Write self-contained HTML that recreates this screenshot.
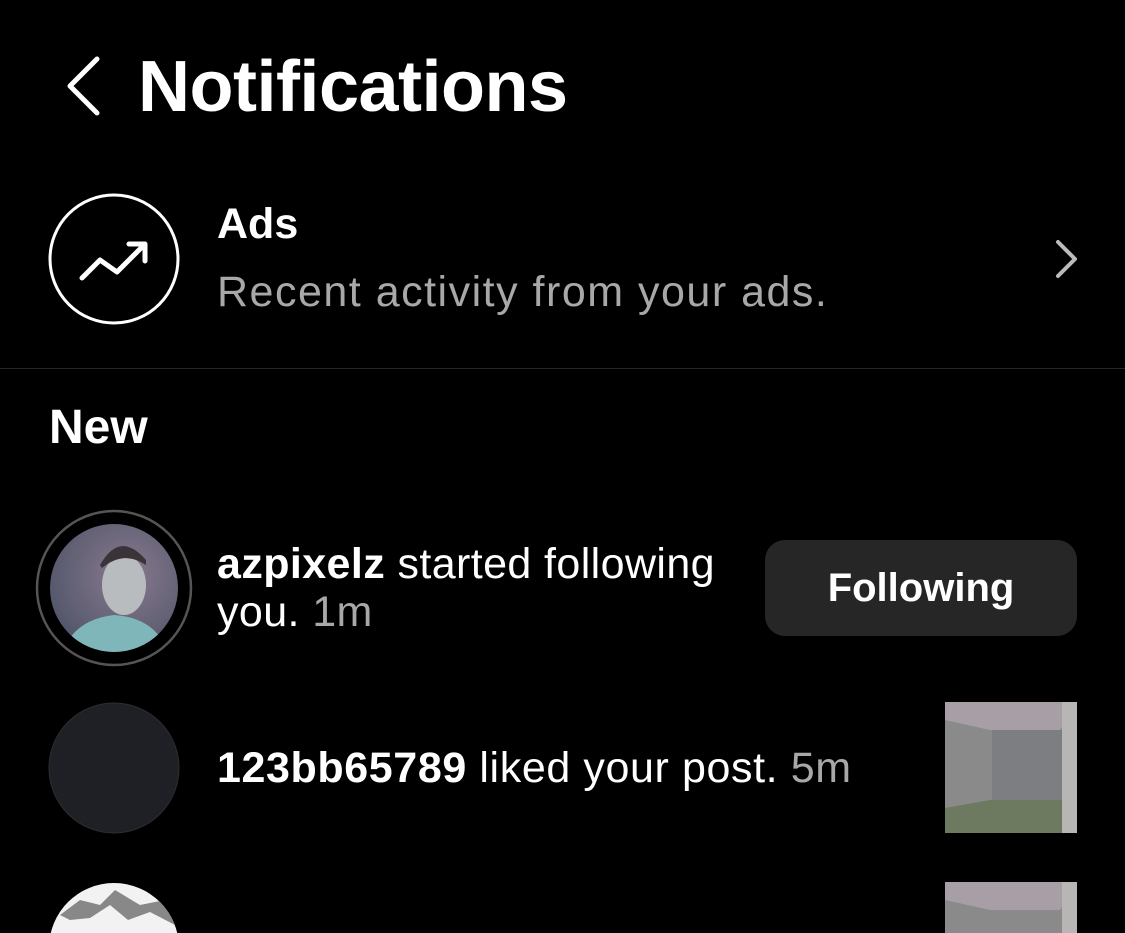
<!DOCTYPE html>
<html><head><style>
html,body{margin:0;padding:0;background:#000;width:1125px;height:933px;overflow:hidden;font-family:"Liberation Sans",Arial,sans-serif;color:#fff}
.a{position:absolute;white-space:nowrap}
</style></head><body>
<svg class="a" style="left:0;top:0" width="1125" height="933">
<path d="M97 59 L70 86 L97 113" fill="none" stroke="#fff" stroke-width="5" stroke-linecap="round" stroke-linejoin="round"/>
<circle cx="114" cy="259" r="64" fill="none" stroke="#fff" stroke-width="3"/>
<path d="M82 278 L100 260 L117 272 L145 244 M129 244 L145 244 L145 261" fill="none" stroke="#fff" stroke-width="5" stroke-linecap="round" stroke-linejoin="round"/>
<path d="M1058 242 L1075 259 L1058 276" fill="none" stroke="#bbb" stroke-width="4" stroke-linecap="round" stroke-linejoin="round"/>
<rect x="0" y="368" width="1125" height="1" fill="#262626"/>
<defs>
<radialGradient id="g1" cx="0.6" cy="0.4" r="0.7"><stop offset="0" stop-color="#8a7a8e"/><stop offset="1" stop-color="#4e5468"/></radialGradient>
<clipPath id="c1"><circle cx="114" cy="588" r="64"/></clipPath>
<clipPath id="c3"><circle cx="114" cy="948" r="65"/></clipPath>
</defs>
<circle cx="114" cy="588" r="77" fill="none" stroke="#555" stroke-width="2.5"/>
<circle cx="114" cy="588" r="64" fill="url(#g1)"/>
<g clip-path="url(#c1)">
<ellipse cx="124" cy="585" rx="22" ry="30" fill="#b9bcbf"/>
<path d="M100 565 Q120 530 146 560 L146 565 Q124 550 102 568Z" fill="#3a3438"/>
<path d="M60 660 Q70 620 114 615 Q160 618 170 660Z" fill="#7fb6b9"/>
</g>
<circle cx="114" cy="768" r="65" fill="#1e2026" stroke="#2e2e2e" stroke-width="1"/>
<g clip-path="url(#c3)">
<rect x="40" y="880" width="150" height="60" fill="#f2f2f2"/>
<path d="M60 915 L80 900 L100 905 L115 890 L140 905 L165 900 L175 925 L150 912 L128 920 L110 905 L90 918 L70 920Z" fill="#888"/>
</g>
<g>
<rect x="945" y="702" width="132" height="131" fill="#8a8a8a"/>
<polygon points="945,702 1077,702 1060,730 990,730 945,720" fill="#a89ea6"/>
<rect x="992" y="730" width="70" height="70" fill="#7d7e82"/>
<polygon points="945,808 990,800 1062,800 1077,833 945,833" fill="#6d7a5f"/>
<rect x="1062" y="702" width="15" height="131" fill="#b8b6b4"/>
<rect x="945" y="882" width="132" height="51" fill="#8a8a8a"/>
<polygon points="945,882 1077,882 1060,910 990,910 945,900" fill="#a89ea6"/>
<rect x="1062" y="882" width="15" height="51" fill="#b8b6b4"/>
</g>
</svg>
<div class="a" style="left:138px;top:46px;font-size:72px;font-weight:bold;letter-spacing:-0.5px">Notifications</div>
<div class="a" style="left:217px;top:200px;font-size:43px;font-weight:bold">Ads</div>
<div class="a" style="left:217px;top:268px;font-size:43px;color:#a8a8a8;letter-spacing:1.5px">Recent activity from your ads.</div>
<div class="a" style="left:49px;top:400px;font-size:48px;font-weight:bold">New</div>
<div class="a" style="left:217px;top:540px;font-size:43px;line-height:48px;letter-spacing:0.4px"><b>azpixelz</b> started following<br>you. <span style="color:#a8a8a8">1m</span></div>
<div class="a" style="left:765px;top:540px;width:312px;height:96px;border-radius:20px;background:#262626;font-size:40px;font-weight:bold;text-align:center;line-height:96px">Following</div>
<div class="a" style="left:217px;top:744px;font-size:43px;letter-spacing:0.6px"><b>123bb65789</b> liked your post. <span style="color:#a8a8a8">5m</span></div>
</body></html>
